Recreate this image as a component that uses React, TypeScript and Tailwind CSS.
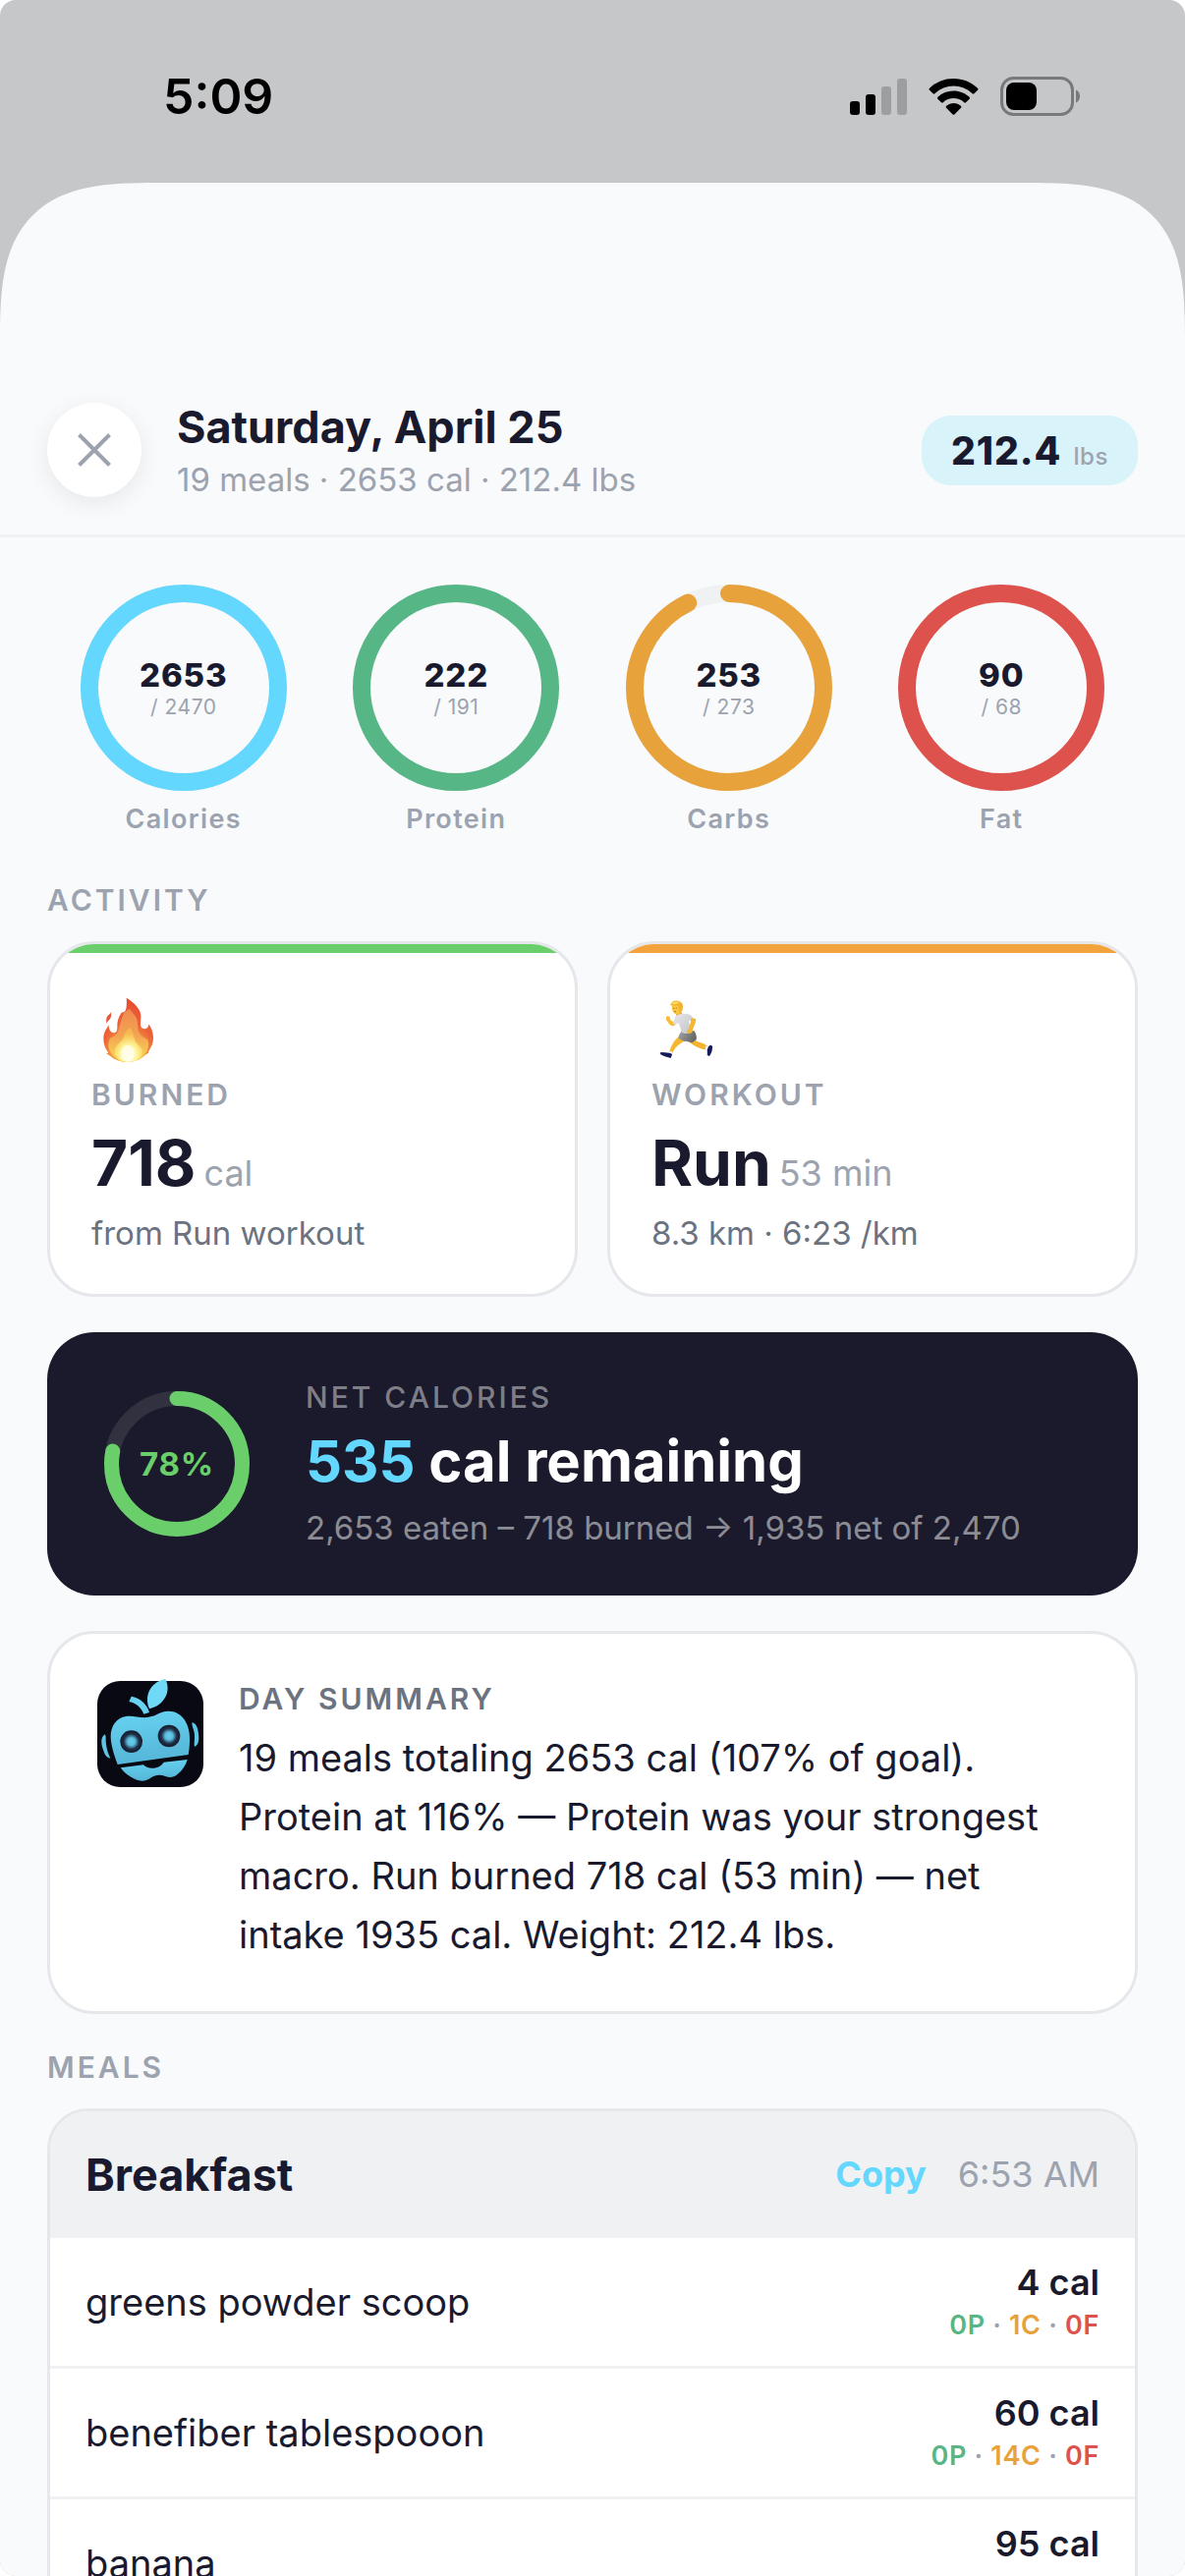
import React from "react";

const INK = "text-[#1a1a2e]";

function SignalIcon() {
  return (
    <svg width="58" height="38" viewBox="0 0 58 38" aria-hidden="true">
      <rect x="0" y="24" width="10" height="14" rx="3" fill="#000" />
      <rect x="16" y="17" width="10" height="21" rx="3" fill="#000" />
      <rect x="32" y="9" width="10" height="29" rx="3" fill="#9d9ea0" />
      <rect x="48" y="1" width="10" height="37" rx="3" fill="#9d9ea0" />
    </svg>
  );
}

function WifiIcon() {
  return (
    <svg width="51" height="38" viewBox="0 0 51 38" aria-hidden="true">
      <path d="M25.500 1C35 1 43.700 4.700 50 10.800a1.300 1.300 0 0 1 0 1.900l-3.600 3.600a1.300 1.300 0 0 1-1.800 0A27.500 27.500 0 0 0 6.400 16.300a1.300 1.300 0 0 1-1.800 0L1 12.700a1.300 1.300 0 0 1 0-1.900A35 35 0 0 1 25.500 1Z" />
      <path d="M25.500 13.500c6.200 0 11.900 2.400 16.100 6.300.5.500.5 1.300 0 1.900L38 25.300c-.5.500-1.300.5-1.800 0a15.700 15.700 0 0 0-21.400 0c-.5.500-1.300.5-1.800 0l-3.600-3.600c-.5-.6-.5-1.400 0-1.900a23.500 23.500 0 0 1 16.100-6.300Z" />
      <path d="M25.500 26c2.900 0 5.500 1.100 7.400 2.800.6.500.6 1.300.1 1.900l-6.600 6.700a1.300 1.300 0 0 1-1.800 0L18 30.700c-.5-.6-.5-1.400.1-1.900A11.200 11.200 0 0 1 25.500 26Z" />
    </svg>
  );
}

function BatteryIcon() {
  return (
    <svg width="82" height="40" viewBox="0 0 82 40" aria-hidden="true">
      <rect x="1.500" y="1.500" width="72" height="37" rx="12" fill="none" stroke="#78797b" strokeWidth="3" />
      <rect x="6" y="6" width="31" height="28" rx="8" />
      <path d="M77 13.500c2.600 1.100 4 3.600 4 6.500s-1.400 5.400-4 6.500Z" fill="#78797b" />
    </svg>
  );
}

function StatusBar() {
  return (
    <div className="flex h-[186px] shrink-0 items-start justify-between pt-[67px] pr-[106px] pl-[166px]">
      <span className="text-[50px] leading-[62px] font-semibold text-black">5:09</span>
      <div className="flex h-[62px] items-center gap-[22px]">
        <SignalIcon />
        <WifiIcon />
        <BatteryIcon />
      </div>
    </div>
  );
}

type RingProps = {
  size: number;
  stroke: number;
  value: number;
  color: string;
  track: string;
  children: React.ReactNode;
};

function Ring({ size, stroke, value, color, track, children }: RingProps) {
  const r = (size - stroke) / 2;
  const c = 2 * Math.PI * r;
  const share = Math.min(value, 1);
  return (
    <div className="grid shrink-0 place-items-center *:col-start-1 *:row-start-1">
      <svg width={size} height={size} viewBox={`0 0 ${size} ${size}`} className="-rotate-90" aria-hidden="true">
        <circle cx={size / 2} cy={size / 2} r={r} fill="none" stroke={track} strokeWidth={stroke} />
        <circle
          cx={size / 2}
          cy={size / 2}
          r={r}
          fill="none"
          stroke={color}
          strokeWidth={stroke}
          strokeLinecap="round"
          strokeDasharray={`${c * share} ${c}`}
        />
      </svg>
      <div className="flex flex-col items-center">{children}</div>
    </div>
  );
}

const macros = [
  { label: "Calories", value: 2653, goal: 2470, color: "#63d7fd" },
  { label: "Protein", value: 222, goal: 191, color: "#56b686" },
  { label: "Carbs", value: 253, goal: 273, color: "#e8a23c" },
  { label: "Fat", value: 90, goal: 68, color: "#de524e" },
];

function FireIcon() {
  return (
    <svg width="72" height="72" viewBox="39 36 216 216" role="img" aria-label="Fire">
      <defs>
        <radialGradient id="flame" cx="0.500" cy="0.950" r="0.950">
          <stop offset="0" stopColor="#fbd34b" />
          <stop offset="0.350" stopColor="#f29a41" />
          <stop offset="0.600" stopColor="#ec6338" />
          <stop offset="1" stopColor="#e8492f" />
        </radialGradient>
        <linearGradient id="flameMid" x1="0" y1="0" x2="0" y2="1">
          <stop offset="0" stopColor="#ef8a50" />
          <stop offset="0.500" stopColor="#f3a353" />
          <stop offset="1" stopColor="#fbdc55" />
        </linearGradient>
        <radialGradient id="flameCore" cx="0.500" cy="0.800" r="0.650">
          <stop offset="0" stopColor="#fffef0" />
          <stop offset="0.450" stopColor="#fef7a0" />
          <stop offset="1" stopColor="#f9d24d" stopOpacity="0.500" />
        </radialGradient>
      </defs>
      <path fill="#e8553c" d="M100 90c-1 9 1 14-4 21-4 6-8 8-11 14-1-9-1-16 3-22 4-5 9-8 12-13Z" />
      <path
        fill="url(#flame)"
        d="M146 47c16 10 35 25 42 44 4 12 1 24 1 36 0 10 5 15 13 15 9-1 12-8 12-15 8 12 14 25 14 42 0 16-5 28-14 40l-1 6-10 7c-13 12-30 21-53 21-22 0-39-6-53-18l-13-9 7-1c-9-12-15-25-15-44 0-18 8-27 16-41 0 13 5 24 15 24s11-10 11-20c0-20 6-31 13-42 9-2 13-5 14-12 2-9 2-20 1-33Z"
      />
      <path
        fill="url(#flameMid)"
        d="M156 80c-9 7-16 8-20 18-8 20-10 36-15 51-5 12-13 16-23 20-9 12-9 27-2 42 8 16 28 31 53 31 29 0 49-13 59-32 7-14 7-26 2-36-8-5-18-8-24-18-8-12-3-28-9-45-4-13-15-19-21-31Z"
      />
      <path
        fill="url(#flameCore)"
        d="M156 138c-9 8-14 13-17 25-3 13-13 19-22 29-11 13-9 28 1 38 9 9 20 12 33 12 20 0 37-8 43-24 5-14-4-21-13-30-11-11-10-18-14-30-2-8-6-14-11-20Z"
      />
      <ellipse cx="150" cy="217" rx="21" ry="25" fill="#fffdf0" opacity="0.750" />
    </svg>
  );
}

function RunnerIcon() {
  return (
    <svg width="72" height="72" viewBox="39 36 216 216" role="img" aria-label="Runner">
      <defs>
        <linearGradient id="shirt" x1="0" y1="0" x2="1" y2="1">
          <stop offset="0" stopColor="#e8e8eb" />
          <stop offset="1" stopColor="#c2c3c8" />
        </linearGradient>
        <linearGradient id="shorts" x1="0" y1="0" x2="1" y2="0.300">
          <stop offset="0" stopColor="#a2a2a2" />
          <stop offset="1" stopColor="#686868" />
        </linearGradient>
      </defs>
      <path d="M163 172c12 6 22 12 36 15l16 11-5 9c-22-5-39-11-55-24Z" fill="#f3b331" />
      <path d="M122 166l16 13c-12 9-19 13-25 20-4 5-6 10-10 17l-9-4c5-17 13-34 28-46Z" fill="#f5b72e" />
      <path d="M205 194l11 3-4 12-8-3Z" fill="#fff" stroke="#d8d8e2" />
      <path d="M214 194c3-3 8-3 11 0 1 10-2 21-9 31l-7-3c2-8-1-13 1-19Z" fill="#151a58" />
      <path d="M94 209l10 4-3 10-10-4Z" fill="#fff" stroke="#d8d8e2" />
      <path d="M67 213c8 1 17 1 26 2 5 1 8 2 9 5l-4 11c-10-3-21-5-32-12Z" fill="#151a58" />
      <path d="M132 148l38 0c5 9 8 19 6 27l-13 9-21-5-3 2-18-11c1-8 5-15 11-22Z" fill="url(#shorts)" />
      <path d="M84 106c2-5 8-4 11-1l2 10 10 6 7 8-9 4c-10-1-13-7-16-12-4-4-7-9-5-15Z" fill="#f8bd34" />
      <path d="M115 92h17l2 11-12 3-8-5Z" fill="#eda92b" />
      <path d="M113 102c11-7 26-8 38-5 8 2 14 7 15 13l-7 8-6-2 6 36c-8 5-20 5-28 0-2-9-5-19-10-28l-11 6-5-8c3-8 6-15 8-20Z" fill="url(#shirt)" />
      <path d="M160 109l13 1c3 5 1 12-2 18l-7 19c0 6-5 10-12 9-6-2-6-8-1-12l8-23Z" fill="#f5b730" />
      <path d="M101 72c0 15 5 24 15 25 10 0 16-6 16-18V68l-15-5Z" fill="#f9c83f" />
      <path d="M97 70c1-10 10-15 21-14 11 1 17 8 17 17 0 10-3 18-9 22-5-3-3-10-4-18l-4-7c-8 2-14 2-21 0Z" fill="#f0b52c" />
      <path d="M100 65c5-7 17-9 25-4-5 5-16 7-25 4Z" fill="#fbdc64" />
      <path d="M105 78l4 1M113 79l4-1M108 89l6 0" stroke="#8b5a16" strokeWidth="2" fill="none" />
    </svg>
  );
}

function RobotAvatar() {
  return (
    <svg width="108" height="108" viewBox="57 63 324 324" className="shrink-0 overflow-visible" role="img" aria-label="Coach">
      <defs>
        <linearGradient id="apple" x1="0" y1="0" x2="0.200" y2="1">
          <stop offset="0" stopColor="#68d3f2" />
          <stop offset="1" stopColor="#55b6d8" />
        </linearGradient>
        <radialGradient id="eye">
          <stop offset="0" stopColor="#67d0ee" />
          <stop offset="0.350" stopColor="#5cbbdc" />
          <stop offset="0.680" stopColor="#1e3148" />
          <stop offset="1" stopColor="#17192c" />
        </radialGradient>
      </defs>
      <rect x="57" y="63" width="324" height="324" rx="70" fill="#080912" />
      <path d="M265 57c9 17 9 39 0 55-10 19-27 31-49 36-9-20-8-44 3-61 11-16 27-27 46-30Z" fill="#70d9f8" />
      <path d="M161 110c27 5 47 22 55 49l-17 5c-8-19-22-33-45-38Z" fill="#68d2f1" />
      <path
        d="M119 318c-11-30-21-61-21-86 0-31 18-58 47-61 27-3 48 9 75 1 20-5 31-16 52-17 39-2 62 32 66 67 2 22 1 44-3 66Z"
        fill="url(#apple)"
      />
      <path
        d="M128 328l70-9c12 15 48 15 62-8l72-8c-5 18-17 35-31 46-11 9-24 10-36 5-16-6-31-5-43 4-15 12-32 13-48 6-20-9-36-22-46-36Z"
        fill="url(#apple)"
      />
      <path d="M80 226c5 7 2 15 4 30 2 16 7 31 13 43-14-1-19-16-24-32-5-15-5-33 7-41Z" fill="#5fc4e3" />
      <path d="M346 190c14 2 18 18 20 34 2 16 2 33-12 40-3-8 1-20 0-36-1-16-8-24-8-38Z" fill="#5fc4e3" />
      <circle cx="161" cy="248" r="34" fill="url(#eye)" />
      <circle cx="276" cy="231" r="34" fill="url(#eye)" />
    </svg>
  );
}

type ActivityProps = {
  icon: React.ReactNode;
  bar: string;
  label: string;
  value: string;
  unit: string;
  note: string;
};

function ActivityCard({ icon, bar, label, value, unit, note }: ActivityProps) {
  return (
    <div className="overflow-hidden rounded-[48px] border-3 border-[#e5e7eb] bg-white">
      <div className={`h-[9px] ${bar}`} />
      <div className="px-[42px] pt-[42px] pb-[41px]">
        {icon}
        <div className="mt-3 text-[30px] leading-9 font-semibold tracking-widest text-[#9ca3af]">{label}</div>
        <div className="mt-4 flex items-baseline gap-2">
          <span className={`text-[64px] leading-[72px] font-bold ${INK}`}>{value}</span>
          <span className="text-[36px] leading-9 text-[#9ca3af]">{unit}</span>
        </div>
        <div className="mt-[14px] text-[33px] leading-[42px] text-[#6b7280]">{note}</div>
      </div>
    </div>
  );
}

function SectionTitle({ children }: { children: React.ReactNode }) {
  return <h2 className="mb-6 text-[30px] leading-9 font-semibold tracking-widest text-[#9ca3af]">{children}</h2>;
}

const foods = [
  { name: "greens powder scoop", cal: 4, p: 0, c: 1, f: 0 },
  { name: "benefiber tablespooon", cal: 60, p: 0, c: 14, f: 0 },
  { name: "banana", cal: 95, p: 1, c: 24, f: 0 },
];

export default function App() {
  return (
    <div className="flex h-screen flex-col overflow-hidden rounded-2xl bg-[#c6c7c9] font-['Inter','Liberation_Sans',sans-serif]">
      <StatusBar />
      <main className="flex min-h-0 flex-1 flex-col overflow-hidden rounded-t-[160px] bg-[#f8fafc] [corner-shape:superellipse(1.57)]">
        <header className="flex shrink-0 items-center border-b-3 border-[#f0f1f3] px-12 pt-[222px] pb-9">
          <button
            type="button"
            aria-label="Close"
            className="flex size-24 shrink-0 items-center justify-center rounded-full bg-white shadow-[0_6px_24px_rgba(0,0,0,0.08)]"
          >
            <svg width="34" height="34" viewBox="0 0 34 34" stroke="#9ca3af" strokeWidth="4" aria-hidden="true">
              <path d="M1.500 1.500l31 31M32.500 1.500l-31 31" />
            </svg>
          </button>
          <div className="ml-9 flex flex-1 flex-col gap-[6px]">
            <h1 className={`text-[45px] leading-[54px] font-bold ${INK}`}>Saturday, April 25</h1>
            <p className="text-[33px] leading-10 text-[#9ca3af]">19 meals · 2653 cal · 212.4 lbs</p>
          </div>
          <div className="flex items-baseline gap-3 rounded-[30px] bg-[#d9f3fa] px-[30px] py-3">
            <span className={`text-[39px] leading-[47px] font-extrabold tracking-wide ${INK}`}>212.4</span>
            <span className="text-[24px] leading-6 font-medium tracking-wide text-[#9ca3af]">lbs</span>
          </div>
        </header>

        <div className="min-h-0 flex-1 overflow-hidden px-12 pt-12">
          <div className="grid grid-cols-4">
            {macros.map((m) => (
              <div key={m.label} className="flex flex-col items-center">
                <Ring size={210} stroke={18} value={m.value / m.goal} color={m.color} track="#f0f1f3">
                  <span className={`text-[33px] leading-10 font-extrabold tracking-wide ${INK}`}>{m.value}</span>
                  <span className="text-[21px] leading-[26px] tracking-wide text-[#9ca3af]">/ {m.goal}</span>
                </Ring>
                <span className="mt-3 text-[27px] leading-[33px] font-semibold tracking-wider text-[#9ca3af]">{m.label}</span>
              </div>
            ))}
          </div>

          <section className="mt-12">
            <SectionTitle>ACTIVITY</SectionTitle>
            <div className="grid grid-cols-2 gap-[30px]">
              <ActivityCard icon={<FireIcon />} bar="bg-[#6ace6a]" label="BURNED" value="718" unit="cal" note="from Run workout" />
              <ActivityCard icon={<RunnerIcon />} bar="bg-[#f2a33c]" label="WORKOUT" value="Run" unit="53 min" note="8.3 km · 6:23 /km" />
            </div>
          </section>

          <section className="mt-9 flex items-center gap-[57px] rounded-[48px] bg-[#1a1a2c] px-[58px] py-12">
            <Ring size={148} stroke={15} value={0.78} color="#6ace6a" track="#31313f">
              <span className="text-[33px] leading-10 font-bold tracking-wide text-[#6ace6a]">78%</span>
            </Ring>
            <div>
              <div className="text-[30px] leading-9 font-medium tracking-widest text-white/45">NET CALORIES</div>
              <div className="mt-3 text-[58px] leading-[70px] font-bold text-white">
                <span className="text-[#63d7fd]">535</span> cal remaining
              </div>
              <div className="mt-3 text-[33px] leading-[42px] text-white/50">2,653 eaten – 718 burned → 1,935 net of 2,470</div>
            </div>
          </section>

          <section className="mt-9 flex items-start gap-9 rounded-[48px] border-3 border-[#e5e7eb] bg-white p-12">
            <RobotAvatar />
            <div>
              <h2 className="text-[30px] leading-9 font-semibold tracking-widest text-[#6b7280]">DAY SUMMARY</h2>
              <p className={`mt-3 text-[38px] leading-[60px] ${INK}`}>
                19 meals totaling 2653 cal (107% of goal). Protein at 116% — Protein was your strongest macro. Run burned 718 cal
                (53 min) — net intake 1935 cal. Weight: 212.4 lbs.
              </p>
            </div>
          </section>

          <section className="mt-9">
            <SectionTitle>MEALS</SectionTitle>
            <div className="overflow-hidden rounded-[42px] border-3 border-[#e5e7eb] bg-white">
              <div className="flex items-center bg-[#f0f1f3] p-9 leading-[57px]">
                <h3 className={`flex-1 text-[45px] font-bold ${INK}`}>Breakfast</h3>
                <button type="button" className="text-[36px] font-bold text-[#63d7fd]">
                  Copy
                </button>
                <span className="ml-8 text-[36px] text-[#9ca3af]">6:53 AM</span>
              </div>
              <ul>
                {foods.map((f) => (
                  <li key={f.name} className="flex items-center justify-between border-b-3 border-[#f0f1f3] px-9 py-[23px]">
                    <span className={`text-[38px] leading-[60px] ${INK}`}>{f.name}</span>
                    <div className="flex flex-col items-end gap-1">
                      <span className={`text-[36px] leading-[44px] font-semibold ${INK}`}>{f.cal} cal</span>
                      <span className="text-[27px] leading-9 font-semibold tracking-wide text-[#9ca3af]">
                        <span className="text-[#56b686]">{f.p}P</span> · <span className="text-[#e8a23c]">{f.c}C</span> ·{" "}
                        <span className="text-[#de524e]">{f.f}F</span>
                      </span>
                    </div>
                  </li>
                ))}
              </ul>
            </div>
          </section>
        </div>
      </main>
    </div>
  );
}
